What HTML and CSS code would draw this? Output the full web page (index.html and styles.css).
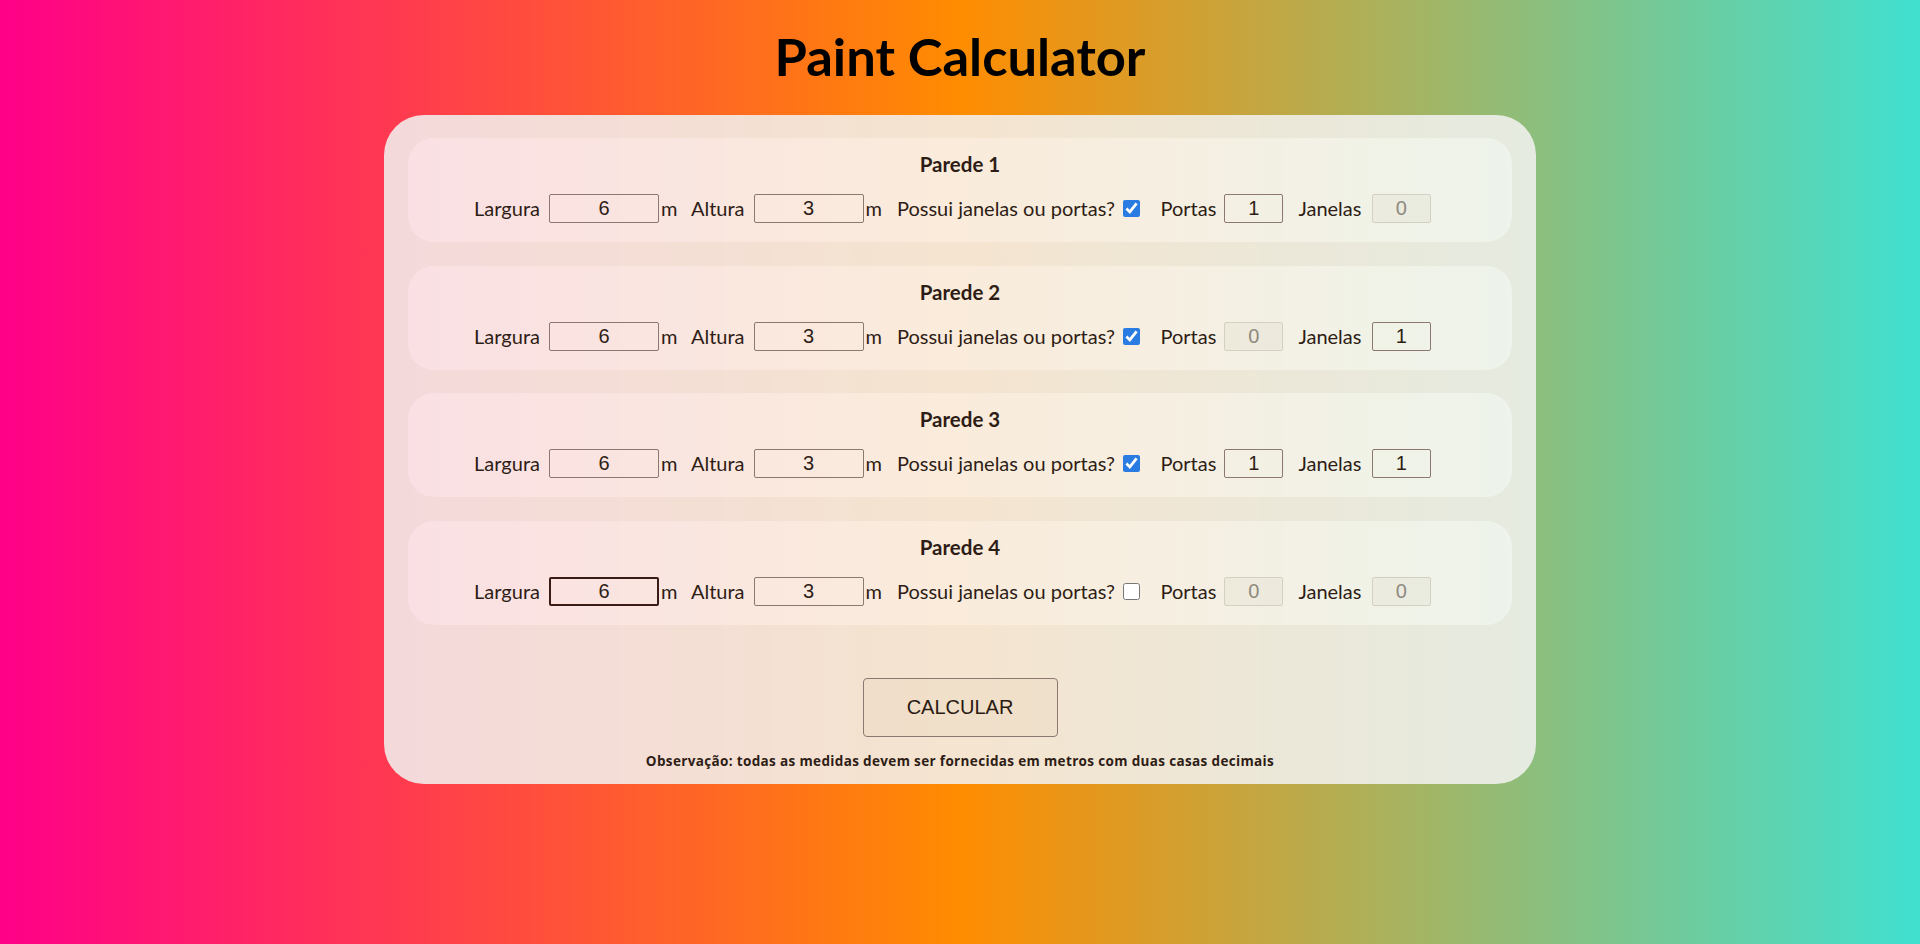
FILE: index.html
```html
<!DOCTYPE html>
<html lang="pt-BR">
<head>
<meta charset="utf-8">
<title>Paint Calculator</title>
<link rel="stylesheet" href="styles.css">
</head>
<body>
<h1 class="title">Paint Calculator</h1>
<main class="card">
  <div class="walls">
    <section class="wall">
      <div class="wall-title">Parede 1</div>
      <div class="row">
        <span class="lbl">Largura</span><input class="field wide" type="text" value="6"><span class="unit">m</span>
        <span class="lbl">Altura</span><input class="field wide" type="text" value="3"><span class="unit unit-last">m</span>
        <span class="lbl">Possui janelas ou portas?</span><input class="check" type="checkbox" checked>
        <span class="lbl">Portas</span><input class="field small gap-after" type="text" value="1">
        <span class="lbl">Janelas</span><input class="field small tight" type="text" value="0" disabled>
      </div>
    </section>
    <section class="wall">
      <div class="wall-title">Parede 2</div>
      <div class="row">
        <span class="lbl">Largura</span><input class="field wide" type="text" value="6"><span class="unit">m</span>
        <span class="lbl">Altura</span><input class="field wide" type="text" value="3"><span class="unit unit-last">m</span>
        <span class="lbl">Possui janelas ou portas?</span><input class="check" type="checkbox" checked>
        <span class="lbl">Portas</span><input class="field small gap-after" type="text" value="0" disabled>
        <span class="lbl">Janelas</span><input class="field small tight" type="text" value="1">
      </div>
    </section>
    <section class="wall">
      <div class="wall-title">Parede 3</div>
      <div class="row">
        <span class="lbl">Largura</span><input class="field wide" type="text" value="6"><span class="unit">m</span>
        <span class="lbl">Altura</span><input class="field wide" type="text" value="3"><span class="unit unit-last">m</span>
        <span class="lbl">Possui janelas ou portas?</span><input class="check" type="checkbox" checked>
        <span class="lbl">Portas</span><input class="field small gap-after" type="text" value="1">
        <span class="lbl">Janelas</span><input class="field small tight" type="text" value="1">
      </div>
    </section>
    <section class="wall">
      <div class="wall-title">Parede 4</div>
      <div class="row">
        <span class="lbl">Largura</span><input class="field wide focused" type="text" value="6"><span class="unit">m</span>
        <span class="lbl">Altura</span><input class="field wide" type="text" value="3"><span class="unit unit-last">m</span>
        <span class="lbl">Possui janelas ou portas?</span><input class="check" type="checkbox">
        <span class="lbl">Portas</span><input class="field small gap-after" type="text" value="0" disabled>
        <span class="lbl">Janelas</span><input class="field small tight" type="text" value="0" disabled>
      </div>
    </section>
  </div>
  <button class="calc" type="button">CALCULAR</button>
  <p class="note">Observação: todas as medidas devem ser fornecidas em metros com duas casas decimais</p>
</main>
</body>
</html>
```
FILE: styles.css
```css
* {
  box-sizing: border-box;
}

html, body {
  margin: 0;
  padding: 0;
}

body {
  min-height: 100vh;
  background: linear-gradient(to right, #ff0088 0%, #ff8c00 50%, #40e0d0 100%);
  font-family: Lato, "Noto Sans", sans-serif;
  color: #2e1d15;
}

.title {
  margin: 0;
  padding-top: 26px;
  height: 83.5px;
  line-height: 60px;
  font-size: 52.5px;
  font-weight: 700;
  text-align: center;
  color: #000;
}

.card {
  width: 60%;
  margin: 31.5px auto 0;
  padding: 23px 24px 15px;
  border-radius: 40px;
  background: rgba(242, 241, 239, 0.87);
}

.walls {
  display: flex;
  flex-direction: column;
  gap: 23.5px;
}

.wall {
  background-image: linear-gradient(to right, rgba(255, 60, 110, 0.07), rgba(255, 160, 60, 0.07) 50%, rgba(150, 230, 160, 0.05));
  background-color: rgba(255, 255, 255, 0.5);
  border-radius: 26px;
  padding: 13px 0 19px;
}

.wall-title {
  height: 26px;
  line-height: 26px;
  margin-bottom: 17px;
  font-size: 20.5px;
  font-weight: 700;
  text-align: center;
}

.row {
  display: flex;
  justify-content: center;
  align-items: center;
  height: 29px;
  padding-right: 15px;
  font-size: 20px;
  white-space: nowrap;
}

.lbl {
  line-height: 29px;
}

.unit {
  line-height: 29px;
  margin-right: 13.5px;
}

.unit-last {
  margin-right: 15px;
}

.field {
  height: 29px;
  margin: 0 2px 0 9px;
  padding: 0;
  border: 1px solid #8c7870;
  border-radius: 2px;
  background: transparent;
  font: 20px "Liberation Sans", Arial, sans-serif;
  color: #2e1d15;
  text-align: center;
  outline: none;
}

.field.wide {
  width: 110px;
}

.field.small {
  width: 59px;
}

.field.gap-after {
  margin: 0 15px 0 8px;
}

.field.tight {
  margin: 0 0 0 10.5px;
}

.field.focused {
  border: 2px solid #3a1c16;
}

.field:disabled {
  border-color: #d6cfc4;
  background: rgba(220, 215, 200, 0.25);
  color: #8e8a80;
}

.check {
  width: 17px;
  height: 17px;
  margin: 0 21px 0 7.5px;
  accent-color: #2a7be2;
}

.calc {
  display: block;
  width: 195px;
  height: 59px;
  margin: 53.5px auto 0;
  padding: 0;
  border: 1px solid #8c7870;
  border-radius: 4px;
  background: rgba(200, 165, 130, 0.08);
  font: 20px "Liberation Sans", Arial, sans-serif;
  color: #2a1a12;
}

.note {
  margin: 16px 0 0;
  font-family: "Open Sans", Lato, sans-serif;
  font-size: 13.5px;
  font-weight: 700;
  letter-spacing: 0.35px;
  line-height: 16px;
  text-align: center;
}
```
